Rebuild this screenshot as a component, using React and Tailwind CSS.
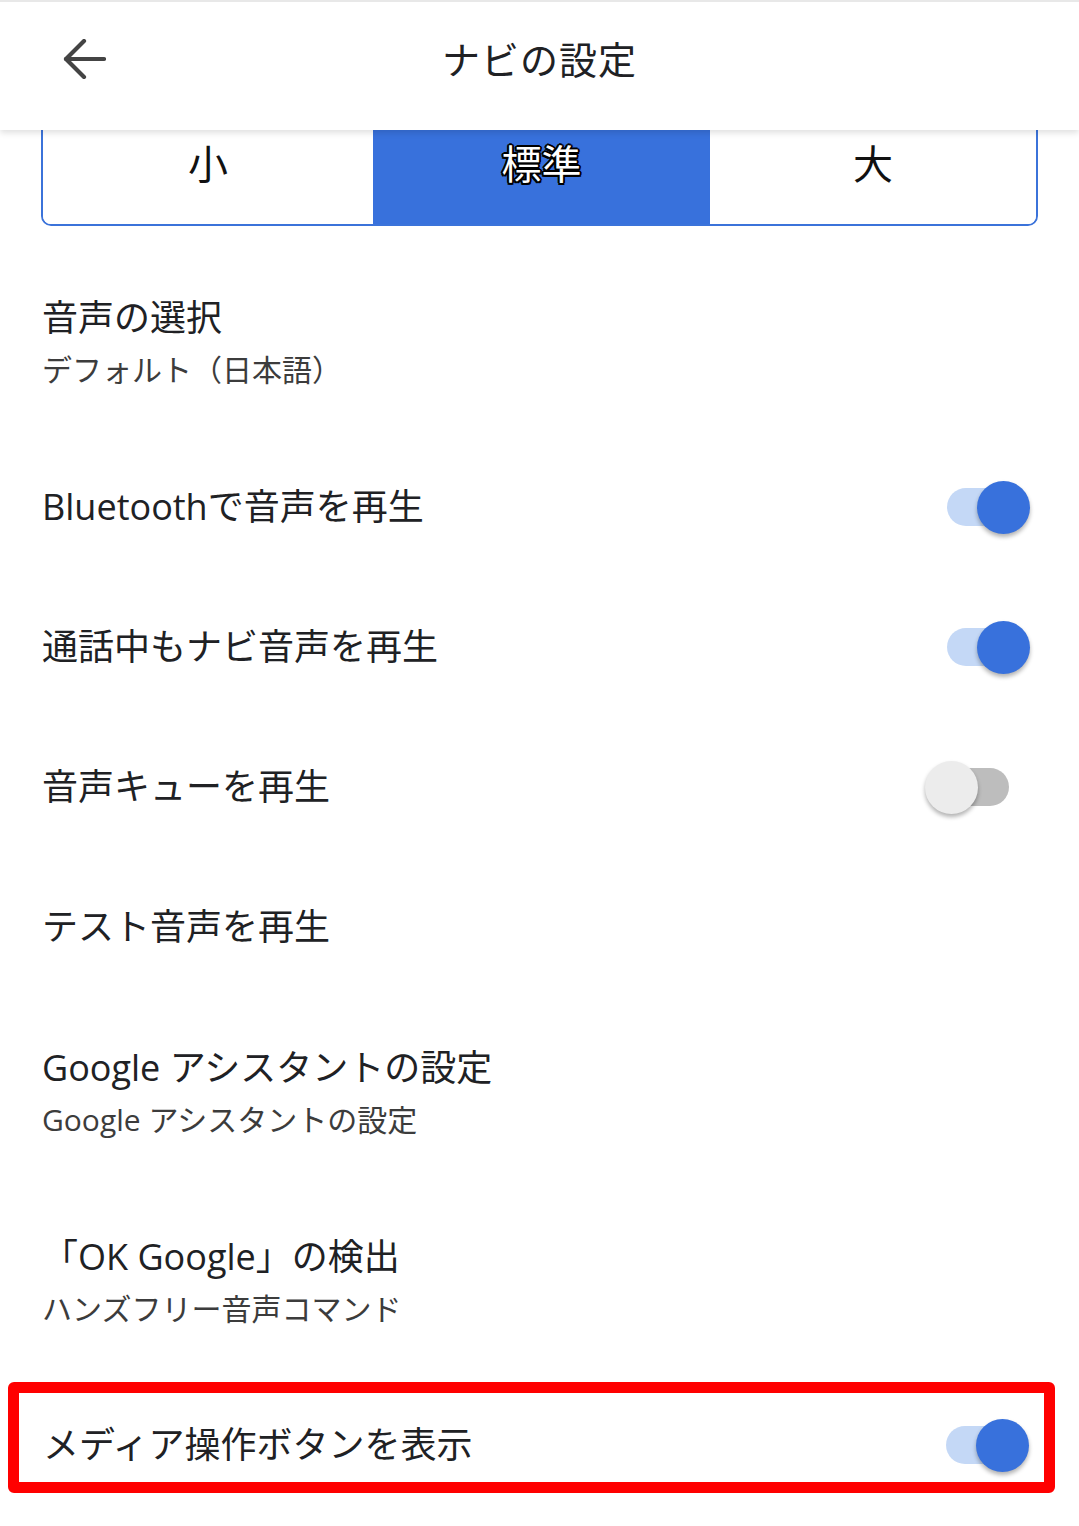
import { useState } from "react";

const font = { fontFamily: "'Open Sans', 'Noto Sans CJK JP', sans-serif" };

const Toggle = ({ on }) => (
  <div className="relative w-[82px] h-[52px] shrink-0">
    <div
      className={`absolute left-0 top-[7px] h-[38px] rounded-full ${
        on ? "w-[64px] bg-[#c4d8f6]" : "w-[62px] bg-[#bdbdbd]"
      }`}
    />
    <div
      className={`absolute top-0 w-[53px] h-[53px] rounded-full shadow-[0_3px_4px_rgba(0,0,0,0.3)] ${
        on ? "left-[30px] bg-[#3871dc]" : "left-[-22px] bg-[#ececec]"
      }`}
    />
  </div>
);

const ToggleRow = ({ label, on }) => (
  <div className="h-[140px] flex items-center justify-between pl-[42px] pr-[50px]">
    <span className="text-[36px] text-[#202124]">{label}</span>
    <Toggle on={on} />
  </div>
);

const TwoLine = ({ title, sub, className }) => (
  <div className={`pl-[42px] ${className}`}>
    <div className="text-[36px] leading-[52px] text-[#202124]">{title}</div>
    <div className="text-[30px] leading-[52px] text-[#3c3c3c]">{sub}</div>
  </div>
);

export default function App() {
  const [size, setSize] = useState("標準");
  const sizes = ["小", "標準", "大"];

  return (
    <div className="w-[1079px] h-[1526px] bg-white overflow-hidden" style={font}>
      {/* ヘッダー */}
      <div className="relative z-10 h-[130px] pb-[14px] bg-white border-t-2 border-[#e8e8e8] shadow-[0_3px_6px_rgba(0,0,0,0.12)] flex items-center justify-center">
        <svg
          className="absolute left-[62px] top-[37px]"
          width="44"
          height="40"
          viewBox="0 0 44 40"
          fill="none"
          stroke="#444"
          strokeWidth="4.2"
          strokeLinecap="round"
          strokeLinejoin="round"
        >
          <path d="M42 20H4" />
          <path d="M22 2 4 20l18 18" />
        </svg>
        <h1 className="text-[38px] text-[#202124] tracking-[1px]">ナビの設定</h1>
      </div>

      {/* 文字サイズ */}
      <div className="-mt-[24px] mx-[41px] w-[997px] h-[120px] grid grid-cols-[330px_337px_1fr] border-2 border-[#3b73da] rounded-b-[10px] overflow-hidden">
        {sizes.map((s) => (
          <button
            key={s}
            onClick={() => setSize(s)}
            className={`flex items-center justify-center text-[40px] pb-[4px] ${
              size === s
                ? "bg-[#3871dc] text-white [text-shadow:-2px_0_#000,2px_0_#000,0_-2px_#000,0_2px_#000,-1.5px_-1.5px_#000,1.5px_1.5px_#000,-1.5px_1.5px_#000,1.5px_-1.5px_#000]"
                : "bg-white text-[#111]"
            }`}
          >
            {s}
          </button>
        ))}
      </div>

      <TwoLine
        title="音声の選択"
        sub="デフォルト（日本語）"
        className="pt-[66px] pb-[41px]"
      />
      <ToggleRow label="Bluetoothで音声を再生" on />
      <ToggleRow label="通話中もナビ音声を再生" on />
      <ToggleRow label="音声キューを再生" on={false} />
      <div className="h-[140px] flex items-center pl-[42px]">
        <span className="text-[36px] text-[#202124]">テスト音声を再生</span>
      </div>
      <TwoLine
        title="Google アシスタントの設定"
        sub="Google アシスタントの設定"
        className="pt-[45px] pb-[42px]"
      />
      <TwoLine
        title="「OK Google」の検出"
        sub="ハンズフリー音声コマンド"
        className="pt-[43px] pb-[47px]"
      />

      {/* 強調枠 */}
      <div className="ml-[8px] mr-[24px] border-[11px] border-[#ff0000] rounded-[6px] pt-[25px] pb-[10px] pl-[24px] pr-[16px] flex items-center justify-between">
        <span className="text-[36px] text-[#202124]">メディア操作ボタンを表示</span>
        <Toggle on />
      </div>
    </div>
  );
}
